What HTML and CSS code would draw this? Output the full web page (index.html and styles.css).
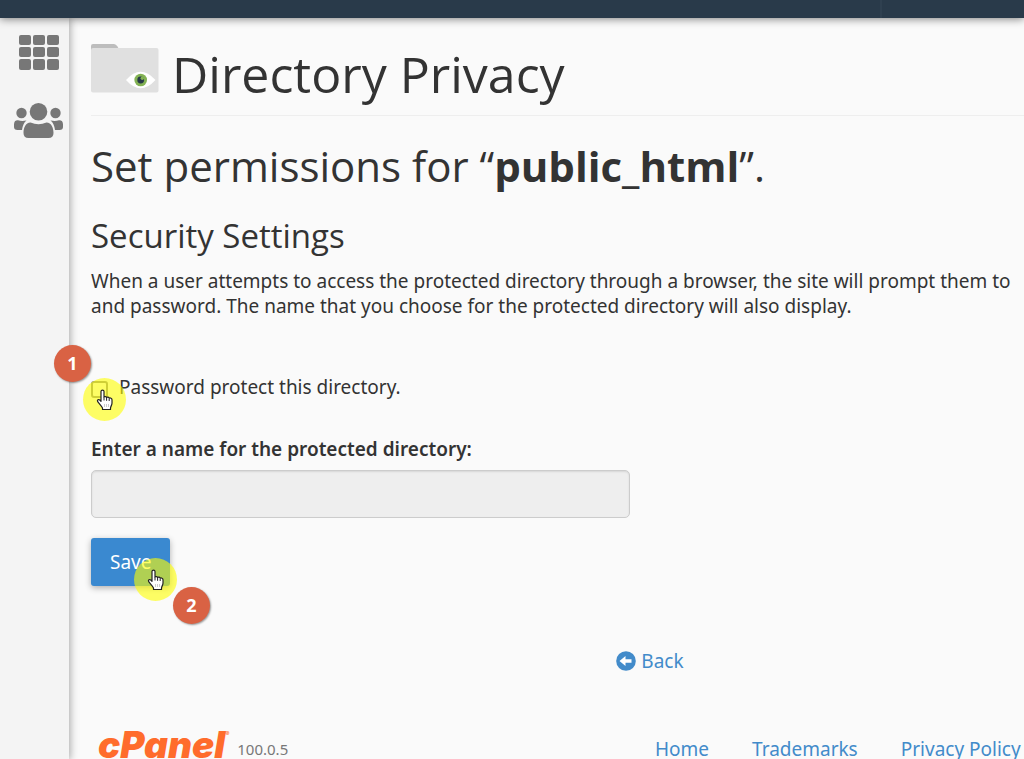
FILE: index.html
```html
<!DOCTYPE html>
<html lang="en">
<head>
  <meta charset="utf-8">
  <title>Directory Privacy</title>
  <link rel="stylesheet" href="styles.css">
</head>
<body>
  <svg class="symbols" aria-hidden="true">
    <symbol id="hand" viewBox="0 0 18 22">
      <path d="M5 2.5C5 .6 8 .6 8 2.5V8c.6-.8 2.3-.6 2.6.5.8-.8 2.3-.4 2.6.7 1-.6 2.8 0 2.8 1.600V14c0 2.200-1.500 3.400-1.500 5.200V20.500H6.500V19C5.500 17 3.200 14.800 1.700 12.700.8 11.200 2.500 9.800 3.800 11L5 12.300z" fill="#fff" stroke="#222" stroke-width="1.200" stroke-linejoin="round"/>
      <path d="M8 8v3.500M10.600 8.800v3M13.200 9.500v2.500" fill="none" stroke="#222"/>
      <path d="M8.500 15v3M10.500 15v3M12.500 15v3" fill="none" stroke="#ccc"/>
    </symbol>
  </svg>
  <header class="topbar"><span class="topbar-divider"></span></header>
  <div class="layout">
    <nav class="sidebar">
      <a href="#" aria-label="Home">
        <svg width="40" height="36" viewBox="0 0 40 36" fill="#777">
          <rect x="0" y="0" width="12" height="10" rx="2"/><rect x="14" y="0" width="12" height="10" rx="2"/><rect x="28" y="0" width="12" height="10" rx="2"/>
          <rect x="0" y="12" width="12" height="10" rx="2"/><rect x="14" y="12" width="12" height="10" rx="2"/><rect x="28" y="12" width="12" height="10" rx="2"/>
          <rect x="0" y="24" width="12" height="11" rx="2"/><rect x="14" y="24" width="12" height="11" rx="2"/><rect x="28" y="24" width="12" height="11" rx="2"/>
        </svg>
      </a>
      <a href="#" aria-label="User Manager">
        <svg width="50" height="36" viewBox="0 0 50 36" fill="#777">
          <circle cx="7.500" cy="11" r="5.200"/>
          <circle cx="41.500" cy="11" r="5.200"/>
          <path d="M4 18.200Q7.500 19.500 12.500 18.500Q9 21 8 28H3.500Q0 28 0 25V22.500Q0 18 4 18.200zM45 18.200Q41.500 19.500 36.500 18.500Q40 21 41 28H45.500Q49 28 49 25V22.500Q49 18 45 18.200z"/>
          <circle cx="24.500" cy="9.800" r="8.800"/>
          <path d="M16.500 20.500Q24.500 24 32.500 20.500C37.500 20.500 39.500 26 39.500 31Q39.500 36 34.500 36H14.500Q9.500 36 9.500 31C9.500 26 11.500 20.500 16.500 20.500z"/>
        </svg>
      </a>
    </nav>
    <main class="content">
      <h1 class="page-title">
        <svg width="68" height="50" viewBox="0 0 68 50" aria-hidden="true">
          <path d="M0 8V3Q0 1 2 1H23Q25 1 26.500 3.500L29 8z" fill="#bdbdbd"/>
          <rect x="0" y="5" width="67.500" height="44.500" rx="2" fill="#e0e0e0"/>
          <path d="M35 37Q49.500 20.500 64.500 37Q49.500 53.500 35 37z" fill="#fff"/>
          <circle cx="49.700" cy="37" r="6.300" fill="#83b254"/>
          <circle cx="49.700" cy="37" r="3.400" fill="#273848"/>
          <circle cx="51.300" cy="35.200" r="1.700" fill="#83b254"/>
        </svg>
        <span>Directory Privacy</span>
      </h1>
      <h2>Set permissions for “<strong>public_html</strong>”.</h2>
      <h3>Security Settings</h3>
      <p class="intro">When a user attempts to access the protected directory through a browser, the site will prompt them to<br>and password. The name that you choose for the protected directory will also display.</p>

      <form>
        <div class="check-row">
          <input type="checkbox" id="protect">
          <label for="protect">Password protect this directory.</label>
          <span class="marker marker-check"><svg class="pointer"><use href="#hand"/></svg></span>
          <span class="step step-check">1</span>
        </div>
        <label class="name-label" for="dirname">Enter a name for the protected directory:</label>
        <input class="name-input" type="text" id="dirname" disabled>
        <div class="save-row">
          <button class="btn" type="button">Save</button>
          <span class="marker marker-save"><svg class="pointer"><use href="#hand"/></svg></span>
          <span class="step step-save">2</span>
        </div>
      </form>

      <div class="back">
        <a href="#">
          <svg width="20" height="20" viewBox="0 0 20 20" aria-hidden="true">
            <circle cx="10" cy="10" r="9.800" fill="#428bca"/>
            <path d="M3.500 10L9.500 5V8.300H15.500V11.700H9.500V15z" fill="#fff"/>
          </svg>
          Back
        </a>
      </div>

      <footer class="footer">
        <div class="brand">
          <a class="logo" href="#">cPanel<sup>®</sup></a>
          <span class="version">100.0.5</span>
        </div>
        <div class="links">
          <a href="#">Home</a>
          <a href="#">Trademarks</a>
          <a href="#">Privacy Policy</a>
        </div>
      </footer>
    </main>
  </div>
</body>
</html>
```
FILE: styles.css
```css
* {
  box-sizing: border-box;
}
body {
  margin: 0;
  min-height: 100vh;
  display: flex;
  flex-direction: column;
  overflow: hidden;
  background: #fafafa;
  color: #333;
  font-family: "Noto Sans", "Open Sans", sans-serif;
  font-size: 19px;
  line-height: 25px;
}
a {
  color: #428bca;
  text-decoration: none;
}
.symbols {
  display: none;
}
.topbar {
  height: 18px;
  background: #293a4a;
  box-shadow: 0 1px 8px rgba(0,0,0,0.5);
  position: relative;
  z-index: 2;
  display: flex;
  justify-content: flex-end;
  padding-right: 142px;
}
.topbar-divider {
  border-left: 2px solid #2f4050;
}
.layout {
  display: flex;
  flex: 1;
}
.sidebar {
  flex: 0 0 69px;
  display: flex;
  flex-direction: column;
  align-items: center;
  gap: 31px;
  padding: 17px 0 0 8px;
  background: #f4f4f4;
  box-shadow: 1px 0 8px rgba(0,0,0,0.35);
}
.sidebar a,
.sidebar svg {
  display: block;
}
.content {
  flex: 1 0 auto;
  min-width: 1140px;
  padding: 25px 0 0 22px;
}
h1, h2, h3 {
  margin: 0;
  font-family: "Open Sans", "Noto Sans", sans-serif;
  font-weight: 400;
}
.page-title {
  display: flex;
  align-items: flex-start;
  gap: 13px;
  padding-bottom: 13px;
  border-bottom: 1px solid #eee;
  font-size: 50px;
  line-height: 56px;
}
.page-title span {
  padding-top: 3px;
}
h2 {
  margin-top: 27px;
  font-size: 42px;
  line-height: 46px;
}
h3 {
  margin-top: 29px;
  font-size: 33px;
  line-height: 36px;
}
.intro {
  margin: 15px 0 56px;
  white-space: nowrap;
}
.check-row {
  position: relative;
  display: flex;
  align-items: center;
  gap: 11px;
}
.check-row input {
  appearance: none;
  width: 17px;
  height: 17px;
  margin: 4px 0 0;
  border: 2px solid #888;
  border-radius: 3px;
}
.name-label {
  display: block;
  margin-top: 37px;
  font-weight: 600;
}
.name-input {
  display: block;
  width: calc(50% - 20px);
  height: 48px;
  margin: 8px 0 20px;
  padding: 8px 16px;
  border: 1px solid #ccc;
  border-radius: 5px;
  background: #eee;
  box-shadow: inset 0 1px 2px rgba(0,0,0,0.1);
  font: inherit;
}
.save-row {
  position: relative;
  display: flex;
}
.btn {
  height: 48px;
  padding: 0 19px;
  border: 0;
  border-radius: 3px;
  background: #3a89d0;
  box-shadow: 0 2px 6px rgba(0,0,0,0.3);
  color: #fff;
  font: inherit;
}

/* click markers and step numbers */
.marker {
  position: absolute;
  width: 43px;
  height: 43px;
  border-radius: 50%;
  background: rgba(255,255,0,0.6);
}
.marker-check {
  left: -8px;
  top: 3px;
}
.marker-save {
  left: 43px;
  top: 20px;
}
.pointer {
  position: absolute;
  left: 13px;
  top: 11px;
  width: 18px;
  height: 22px;
}
.step {
  position: absolute;
  width: 37px;
  height: 37px;
  border-radius: 50%;
  background: #d96244;
  box-shadow: 1px 1px 2px rgba(0,0,0,0.4);
  color: #fff;
  font-size: 18px;
  font-weight: 700;
  line-height: 36px;
  text-align: center;
}
.step-check {
  left: -37px;
  top: -30px;
}
.step-save {
  left: 82px;
  top: 49px;
}

.back {
  margin-top: 63px;
  text-align: center;
}
.back a {
  display: inline-flex;
  align-items: center;
  gap: 5px;
}
.back svg {
  margin-bottom: 2px;
}
.footer {
  display: grid;
  grid-template-columns: 1fr 1fr;
  height: 23px;
  margin-top: 60px;
  white-space: nowrap;
}
.brand {
  display: flex;
  align-items: flex-start;
  gap: 8px;
  padding-left: 7px;
}
.logo {
  margin-top: -14px;
  color: #ff6c2c;
  font-family: Inter, "Open Sans", sans-serif;
  font-size: 37px;
  font-style: italic;
  font-weight: 900;
  line-height: 44px;
}
.logo sup {
  font-size: 6px;
  font-weight: 400;
  vertical-align: 22px;
  line-height: 1;
}
.version {
  color: #777;
  font-size: 15px;
}
.links {
  display: flex;
  gap: 43px;
  padding-left: 5px;
}
```
